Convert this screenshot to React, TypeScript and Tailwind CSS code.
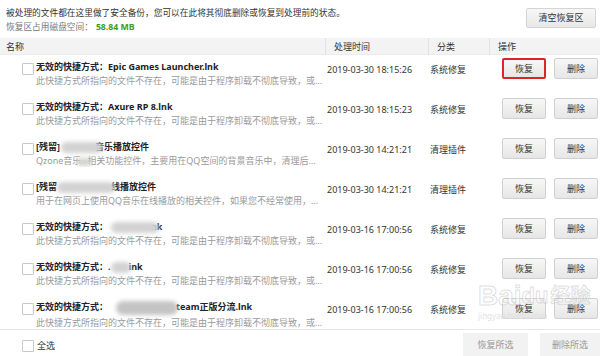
import React from "react";

const FONT = '"Noto Sans", "Noto Sans CJK SC", sans-serif';

function Blob({ w, h = 11, dark = false, className = "" }: { w: number; h?: number; dark?: boolean; className?: string }) {
  return (
    <span
      className={`relative z-10 inline-block rounded-full align-middle blur-[2px] ${dark ? "bg-[#c4c4c4]" : "bg-[#d2d2d2]"} ${className}`}
      style={{ width: w, height: h }}
    />
  );
}

function Check() {
  return <span className="block h-[12px] w-[12px] shrink-0 rounded-[1px] border border-[#c9c9c9] bg-white" />;
}

function Btn({ label, active = false }: { label: string; active?: boolean }) {
  return (
    <span
      className={`flex h-[21px] w-[44px] items-center justify-center rounded-[2px] bg-gradient-to-b from-[#f7f7f7] to-[#e6e6e6] text-[9px] text-[#333] ${
        active ? "border-2 border-[#d8262b]" : "border border-[#d0d0d0]"
      }`}
    >
      {label}
    </span>
  );
}

const DESC = "此快捷方式所指向的文件不存在，可能是由于程序卸载不彻底导致，或程序已被移动";

type Row = {
  title: React.ReactNode;
  desc: React.ReactNode;
  time: string;
  cat: string;
  active?: boolean;
};

const rows: Row[] = [
  { title: <>无效的快捷方式：Epic Games Launcher.lnk</>, desc: DESC, time: "2019-03-30 18:15:26", cat: "系统修复", active: true },
  { title: <>无效的快捷方式：Axure RP 8.lnk</>, desc: DESC, time: "2019-03-30 18:15:23", cat: "系统修复" },
  {
    title: (
      <>
        [残留]
        <Blob w={42} className="ml-[1px] mr-[-8px]" />
        音乐播放控件
      </>
    ),
    desc: (
      <>
        Qzone音乐
        <Blob w={14} h={8} className="mx-[-4px]" />
        相关功能控件，主要用在QQ空间的背景音乐中，清理后可能影响背景音乐播放
      </>
    ),
    time: "2019-03-30 14:21:21",
    cat: "清理插件",
  },
  {
    title: (
      <>
        [残留
        <Blob w={58} className="mr-[-4px]" />
        线播放控件
      </>
    ),
    desc: "用于在网页上使用QQ音乐在线播放的相关控件，如果您不经常使用，可以清理",
    time: "2019-03-30 14:21:21",
    cat: "清理插件",
  },
  {
    title: (
      <>
        无效的快捷方式：
        <Blob w={48} className="ml-[3px] mr-[-8px]" />
        nk
      </>
    ),
    desc: DESC,
    time: "2019-03-16 17:00:56",
    cat: "系统修复",
  },
  {
    title: (
      <>
        无效的快捷方式：.
        <Blob w={20} className="mr-[-2px]" />
        ink
      </>
    ),
    desc: DESC,
    time: "2019-03-16 17:00:56",
    cat: "系统修复",
  },
  {
    title: (
      <>
        无效的快捷方式：
        <Blob w={62} h={14} dark className="ml-[8px] mr-[-2px]" />
        team正版分流.lnk
      </>
    ),
    desc: DESC,
    time: "2019-03-16 17:00:56",
    cat: "系统修复",
  },
];

export default function App() {
  return (
    <div className="relative h-[356px] w-[600px] overflow-hidden bg-white text-[#333]" style={{ fontFamily: FONT }}>
      {/* top info */}
      <div className="flex h-[38px] justify-between">
        <div className="pl-[6px] pt-[7px]">
          <div className="text-[8.7px] leading-[12px] text-[#333]">
            被处理的文件都在这里做了安全备份，您可以在此将其彻底删除或恢复到处理前的状态。
          </div>
          <div className="mt-[2px] text-[8.7px] leading-[12px] text-[#777]">
            恢复区占用磁盘空间：<span className="ml-[3px] font-bold text-[#3d9b22]">58.84 MB</span>
          </div>
        </div>
        <div className="pr-[4px] pt-[8px]">
          <span className="flex h-[20px] w-[70px] items-center justify-center rounded-[2px] border border-[#d4d4d4] bg-gradient-to-b from-[#f7f7f7] to-[#e8e8e8] text-[9px] text-[#333]">
            清空恢复区
          </span>
        </div>
      </div>

      {/* header */}
      <div className="grid h-[17px] grid-cols-[325px_103px_61px_111px] border-b border-[#ececec] bg-[#f3f3f3] text-[9px] leading-[17px] text-[#333]">
        <div className="pl-[6px]">名称</div>
        <div className="border-l border-[#e2e2e2] pl-[8px]">处理时间</div>
        <div className="border-l border-[#e2e2e2] pl-[8px]">分类</div>
        <div className="border-l border-[#e2e2e2] pl-[8px]">操作</div>
      </div>

      {/* list */}
      <div className="h-[275px] overflow-hidden border-b border-[#e6e6e6]">
        {rows.map((r, i) => (
          <div key={i} className="grid h-[40px] grid-cols-[325px_103px_61px_111px]">
            <div className="flex min-w-0 items-start pl-[22px]">
              <div className="mt-[8px]">
                <Check />
              </div>
              <div className="ml-[2px] min-w-0 flex-1 pt-[5px]">
                <div className="whitespace-nowrap text-[9px] font-bold leading-[13px] text-[#222]">{r.title}</div>
                <div className="mt-[1px] overflow-hidden text-ellipsis whitespace-nowrap pr-[2px] text-[9px] leading-[13px] text-[#9a9a9a]">
                  {r.desc}
                </div>
              </div>
            </div>
            <div className="pl-[2px] pt-[9px] text-[9px] leading-[12px] text-[#333]">{r.time}</div>
            <div className="pl-[2px] pt-[9px] text-[9px] leading-[12px] text-[#333]">{r.cat}</div>
            <div className="flex gap-[8px] pl-[13px] pt-[3px]">
              <Btn label="恢复" active={r.active} />
              <Btn label="删除" />
            </div>
          </div>
        ))}
      </div>

      {/* footer */}
      <div className="flex h-[26px] items-center justify-between">
        <div className="flex items-center pl-[22px] pt-[6px]">
          <Check />
          <span className="ml-[3px] text-[9px] text-[#333]">全选</span>
        </div>
        <div className="flex gap-[12px] self-end">
          <span className="flex h-[23px] w-[65px] items-center justify-center bg-[#f2f2f2] text-[9px] text-[#999]">恢复所选</span>
          <span className="flex h-[23px] w-[60px] items-center justify-center bg-[#f2f2f2] text-[9px] text-[#999]">删除所选</span>
        </div>
      </div>

      {/* watermark */}
      <div className="pointer-events-none absolute left-[478px] top-[282px] select-none whitespace-nowrap">
        <div
          className="flex items-end text-[28px] font-bold leading-[28px] text-white/50"
          style={{ fontFamily: '"Liberation Sans", "Noto Sans CJK SC", sans-serif', WebkitTextStroke: "1px rgba(160,160,160,0.35)" }}
        >
          <span>Bai</span>
          <span className="text-[22px]">du</span>
          <span className="ml-[2px] text-[20px]">经验</span>
        </div>
        <div className="mt-[1px] text-[8px] leading-[10px] text-[#e2e2e2]">jingyan.baidu.com</div>
      </div>
    </div>
  );
}
